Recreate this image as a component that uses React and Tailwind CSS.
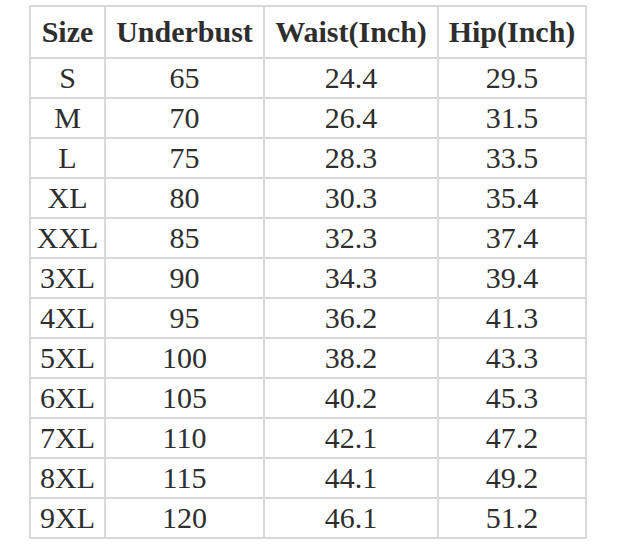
const headers = ["Size", "Underbust", "Waist(Inch)", "Hip(Inch)"];
const rows = [
  ["S", "65", "24.4", "29.5"],
  ["M", "70", "26.4", "31.5"],
  ["L", "75", "28.3", "33.5"],
  ["XL", "80", "30.3", "35.4"],
  ["XXL", "85", "32.3", "37.4"],
  ["3XL", "90", "34.3", "39.4"],
  ["4XL", "95", "36.2", "41.3"],
  ["5XL", "100", "38.2", "43.3"],
  ["6XL", "105", "40.2", "45.3"],
  ["7XL", "110", "42.1", "47.2"],
  ["8XL", "115", "44.1", "49.2"],
  ["9XL", "120", "46.1", "51.2"],
];

export default function App() {
  return (
    <div className="w-[618px] h-[549px] bg-white pt-[5px] pl-[29px] font-['Liberation_Serif','Times_New_Roman',serif] text-[#2e2e2e]">
      <div className="grid w-max grid-cols-[73px_157px_172px_146px] grid-rows-[50px_repeat(12,38px)] gap-[2px] bg-[#d9d9d9] p-[2px] text-[30px] leading-none">
        {headers.map((h) => (
          <div key={h} className="flex items-center justify-center bg-white font-bold whitespace-nowrap">
            {h}
          </div>
        ))}
        {rows.map((r) =>
          r.map((c, i) => (
            <div key={r[0] + i} className="flex items-center justify-center bg-white whitespace-nowrap">
              {c}
            </div>
          ))
        )}
      </div>
    </div>
  );
}
